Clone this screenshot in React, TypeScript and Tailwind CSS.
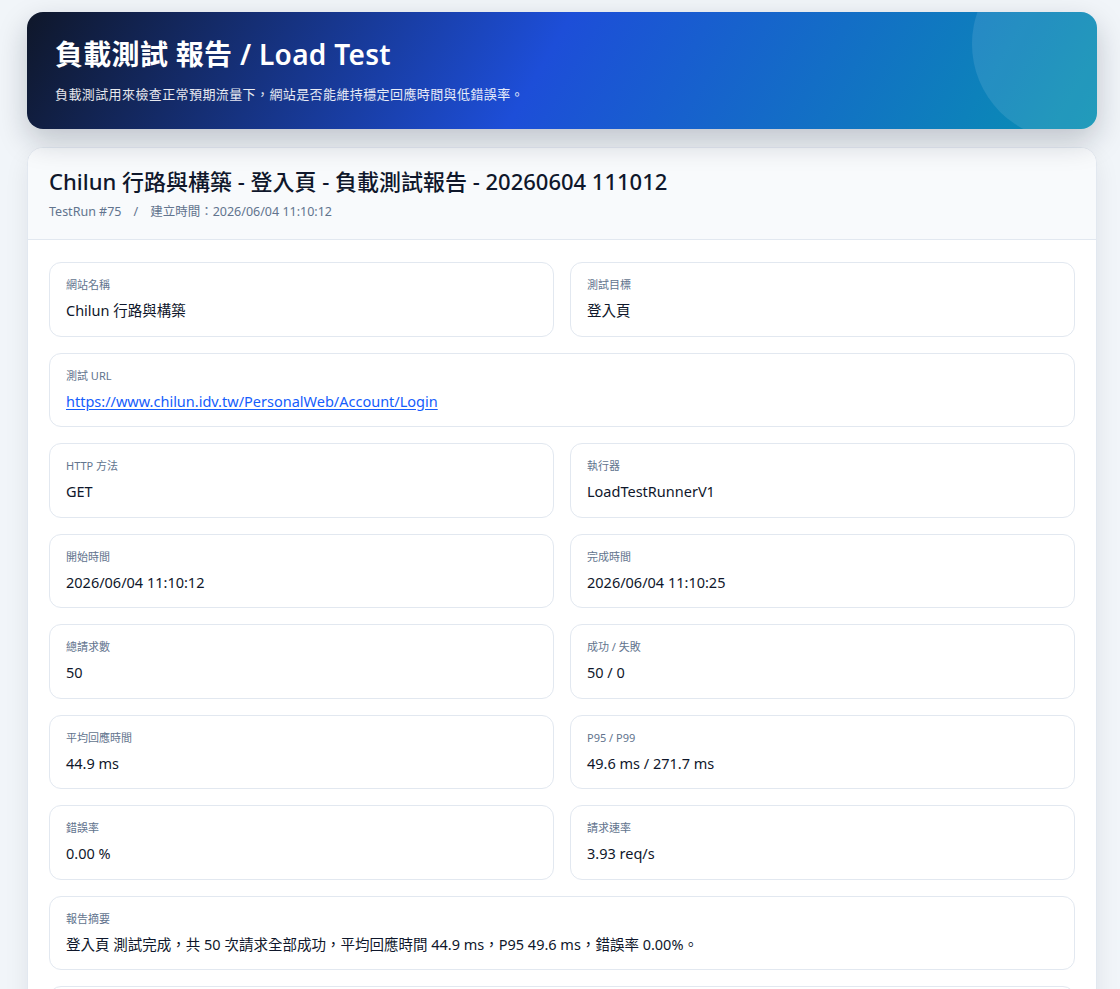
import React from "react";

type Field = {
    label: string;
    value: string;
    full?: boolean;
    href?: string;
}

const fields: Field[] = [
    { label: "網站名稱", value: "Chilun 行路與構築" },
    { label: "測試目標", value: "登入頁" },
    { label: "測試 URL", value: "https://www.chilun.idv.tw/PersonalWeb/Account/Login", full: true, href: "https://www.chilun.idv.tw/PersonalWeb/Account/Login" },
    { label: "HTTP 方法", value: "GET" },
    { label: "執行器", value: "LoadTestRunnerV1" },
    { label: "開始時間", value: "2026/06/04 11:10:12" },
    { label: "完成時間", value: "2026/06/04 11:10:25" },
    { label: "總請求數", value: "50" },
    { label: "成功 / 失敗", value: "50 / 0" },
    { label: "平均回應時間", value: "44.9 ms" },
    { label: "P95 / P99", value: "49.6 ms / 271.7 ms" },
    { label: "錯誤率", value: "0.00 %" },
    { label: "請求速率", value: "3.93 req/s" },
    { label: "報告摘要", value: "登入頁 測試完成，共 50 次請求全部成功，平均回應時間 44.9 ms，P95 49.6 ms，錯誤率 0.00%。", full: true },
    { label: "備註", value: "無", full: true },
]

const FieldBox = ({ label, value, full, href }: Field) => (
    <div className={`${full ? "col-span-2" : ""} rounded-xl border border-slate-200 bg-white px-4 pt-[14px] pb-[15px]`}>
        <div className="text-[11px] leading-4 text-slate-500">{label}</div>
        <div className="mt-[7px] text-[14.5px] leading-[20.5px] text-slate-900">
            {href ? (
                <a href={href} className="text-blue-600 underline underline-offset-2">{value}</a>
            ) : value}
        </div>
    </div>
)

export default function App() {
    return (
        <div
            className="min-h-screen bg-slate-100 pl-[27px] pr-[23px] pt-3 pb-8"
            style={{ fontFamily: '"Segoe UI", "Noto Sans", "Noto Sans CJK TC", sans-serif' }}
        >
            <header className="relative overflow-hidden rounded-2xl bg-[linear-gradient(120deg,#0f172a_0%,#1d4ed8_48%,#0891b2_100%)] px-7 pt-[22px] pb-[25px] text-white shadow-[0_12px_30px_rgba(15,23,42,0.22)]">
                <div className="absolute -right-[67px] -top-16 h-48 w-48 rounded-full bg-white/10" />
                <h1 className="relative text-[28px] font-semibold leading-10 tracking-[0.3px]">負載測試 報告 / Load Test</h1>
                <p className="relative mt-[10px] text-[13px] leading-5 tracking-[0.4px] text-white/90">負載測試用來檢查正常預期流量下，網站是否能維持穩定回應時間與低錯誤率。</p>
            </header>

            <main className="mt-[18px] overflow-hidden rounded-2xl border border-slate-200 bg-white shadow-[0_10px_25px_rgba(15,23,42,0.08)]">
                <div className="border-b border-slate-200 bg-slate-50 px-[21px] pt-[17px] pb-[17px]">
                    <h2 className="text-[22px] font-medium leading-8 text-slate-900">Chilun 行路與構築 - 登入頁 - 負載測試報告 - 20260604 111012</h2>
                    <div className="mt-[5px] flex gap-3 text-[12.5px] leading-5 text-slate-500">
                        <span>TestRun #75</span>
                        <span>/</span>
                        <span>建立時間：2026/06/04 11:10:12</span>
                    </div>
                </div>
                <div className="grid grid-cols-2 gap-4 pl-[21px] pr-[21px] pt-[22px] pb-[21px]">
                    {fields.map((f) => <FieldBox key={f.label} {...f} />)}
                </div>
            </main>
        </div>
    );
}
